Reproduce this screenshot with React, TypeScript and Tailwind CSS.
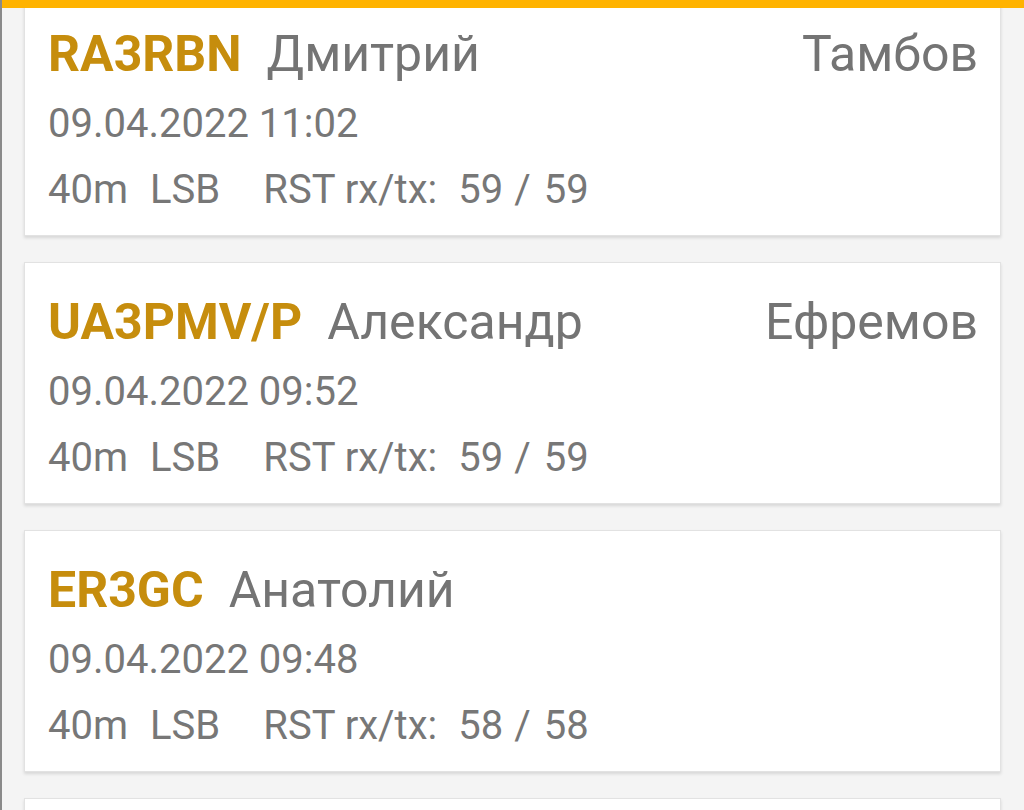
import React from "react";

type Qso = {
  call: string;
  name: string;
  city: string;
  date: string;
  band: string;
  mode: string;
  rx: string;
  tx: string;
};

const qsos: Qso[] = [
  { call: "RA3RBN", name: "Дмитрий", city: "Тамбов", date: "09.04.2022 11:02", band: "40m", mode: "LSB", rx: "59", tx: "59" },
  { call: "UA3PMV/P", name: "Александр", city: "Ефремов", date: "09.04.2022 09:52", band: "40m", mode: "LSB", rx: "59", tx: "59" },
  { call: "ER3GC", name: "Анатолий", city: "", date: "09.04.2022 09:48", band: "40m", mode: "LSB", rx: "58", tx: "58" },
  { call: "", name: "", city: "", date: "", band: "", mode: "", rx: "", tx: "" }
];

function QsoCard({ q }: { q: Qso }) {
  return (
    <div className="shrink-0 h-[242px] bg-white border border-[#e2e2e2] shadow-[0_2px_3px_rgba(0,0,0,0.12)] pl-[23px] pr-[22px] pt-[30px]">
      {q.call && (
        <>
          <div className="flex items-baseline h-[58px] leading-[58px] text-[50px]">
            <span className="font-bold text-[#c68d0d] mr-[25px]">{q.call}</span>
            <span className="text-[#747474]">{q.name}</span>
            <span className="ml-auto text-[#747474]">{q.city}</span>
          </div>
          <div className="mt-[8px] h-[66px] leading-[66px] text-[40px] text-[#777777]">{q.date}</div>
          <div className="flex h-[66px] leading-[66px] text-[40px] text-[#777777]">
            <span>{q.band}</span>
            <span className="ml-[22px]">{q.mode}</span>
            <span className="ml-[43px]">RST rx/tx:</span>
            <span className="ml-[21px]">{q.rx}</span>
            <span className="ml-[11px]">/</span>
            <span className="ml-[13px]">{q.tx}</span>
          </div>
        </>
      )}
    </div>
  );
}

export default function App() {
  return (
    <div
      className="relative h-[810px] w-[1024px] overflow-hidden bg-[#f4f4f4] border-l-2 border-[#8a8a8a]"
      style={{ fontFamily: "Roboto, 'Noto Sans', sans-serif" }}
    >
      <div className="absolute inset-x-0 top-0 z-10 h-[8px] bg-[#ffb300]" />
      <div className="flex flex-col gap-[26px] -mt-[6px] ml-[22px] mr-[23px]">
        {qsos.map((q, i) => (
          <QsoCard key={i} q={q} />
        ))}
      </div>
    </div>
  );
}
